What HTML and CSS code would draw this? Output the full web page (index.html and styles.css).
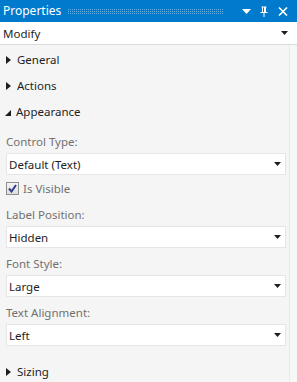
FILE: index.html
```html
<!DOCTYPE html>
<html>
<head>
<meta charset="utf-8">
<link rel="stylesheet" href="styles.css">
</head>
<body>
<div class="panel">
  <div class="titlebar">
    <span class="title">Properties</span>
    <svg class="grip" height="5"><defs><pattern id="dots" width="2" height="2" patternUnits="userSpaceOnUse"><rect width="1" height="1" fill="#63ade3"/></pattern></defs><rect width="100%" height="100%" fill="url(#dots)"/></svg>
    <svg class="tb-icon" width="9" height="5" viewBox="0 0 9 5"><path d="M0 0H9L4.5 5Z" fill="#fff"/></svg>
    <svg class="tb-icon" width="8" height="11" viewBox="0 0 8 11"><path d="M1.5 0.5H6.5V1.5H6V6H7.5V7H4.5V11H3.5V7H0.5V6H2V1.5H1.5Z M3 1.5V6H4V1.5Z" fill="#fff" fill-rule="evenodd"/></svg>
    <svg class="tb-icon x" width="10" height="9" viewBox="0 0 10 9"><path d="M1 0.5L9 8.5M9 0.5L1 8.5" stroke="#fff" stroke-width="1.6"/></svg>
  </div>
  <div class="selector">
    <span>Modify</span>
    <svg class="arrow" width="7" height="4" viewBox="0 0 7 4"><path d="M0 0H7L3.5 4Z" fill="#1e1e1e"/></svg>
  </div>
  <div class="body">
    <div class="content">
      <div class="section"><span class="tri-right"></span>General</div>
      <div class="section"><span class="tri-right"></span>Actions</div>
      <div class="section"><svg class="tri-open" width="6" height="6" viewBox="0 0 6 6"><path d="M6 0V6H0Z" fill="#1e1e1e"/></svg>Appearance</div>
      <div class="fields">
        <div class="field first">
          <div class="label">Control Type:</div>
          <div class="combo"><span>Default (Text)</span><svg width="7" height="4" viewBox="0 0 7 4"><path d="M0 0H7L3.5 4Z" fill="#1e1e1e"/></svg></div>
        </div>
        <div class="check-row">
          <span class="checkbox"><svg width="9" height="9" viewBox="0 0 9 9"><path d="M1 4.5L3.5 7.5L8 1" stroke="#2d3f8f" stroke-width="2" fill="none"/></svg></span>
          <span class="check-label">Is Visible</span>
        </div>
        <div class="field">
          <div class="label">Label Position:</div>
          <div class="combo"><span>Hidden</span><svg width="7" height="4" viewBox="0 0 7 4"><path d="M0 0H7L3.5 4Z" fill="#1e1e1e"/></svg></div>
        </div>
        <div class="field">
          <div class="label">Font Style:</div>
          <div class="combo"><span>Large</span><svg width="7" height="4" viewBox="0 0 7 4"><path d="M0 0H7L3.5 4Z" fill="#1e1e1e"/></svg></div>
        </div>
        <div class="field">
          <div class="label">Text Alignment:</div>
          <div class="combo"><span>Left</span><svg width="7" height="4" viewBox="0 0 7 4"><path d="M0 0H7L3.5 4Z" fill="#1e1e1e"/></svg></div>
        </div>
      </div>
      <div class="section sizing"><span class="tri-right"></span>Sizing</div>
    </div>
    <div class="strip"></div>
  </div>
</div>
</body>
</html>
```
FILE: styles.css
```css
html, body {
  margin: 0;
  padding: 0;
}
body {
  width: 297px;
  height: 382px;
  overflow: hidden;
  background: #f5f5f5;
  font-family: "Noto Sans", "Open Sans", sans-serif;
  font-size: 11.5px;
  color: #1e1e1e;
}
.panel {
  display: flex;
  flex-direction: column;
  height: 382px;
}
.titlebar {
  flex-shrink: 0;
  height: 22px;
  background: #007acc;
  display: flex;
  align-items: center;
  padding: 0 9px 0 3px;
  color: #fff;
  box-sizing: border-box;
}
.title {
  font-size: 12px;
  line-height: 22px;
}
.grip {
  flex: 1;
  display: block;
  margin: 0 9px 0 7px;
}
.tb-icon {
  display: block;
  margin-left: 9px;
}
.tb-icon.x {
  margin-left: 10px;
}
.selector {
  flex-shrink: 0;
  height: 22px;
  background: #fff;
  border-bottom: 1px solid #dcdcdc;
  display: flex;
  align-items: center;
  justify-content: space-between;
  padding: 0 9px 0 3px;
}
.selector .arrow {
  display: block;
}
.body {
  flex: 1;
  min-height: 0;
  display: flex;
}
.content {
  flex: 1;
  padding: 2px 0 0 6px;
}
.strip {
  width: 7px;
  border-left: 1px solid #ececec;
  background: #f7f7f7;
}
.section {
  height: 26px;
  display: flex;
  align-items: center;
  line-height: 26px;
}
.tri-right {
  width: 0;
  height: 0;
  border-top: 4px solid transparent;
  border-bottom: 4px solid transparent;
  border-left: 5px solid #1e1e1e;
  margin: 0 6px 0 0;
}
.tri-open {
  display: block;
  margin: 2px 5px 0 -1px;
}
.fields {
  display: flex;
  flex-direction: column;
  padding-right: 3px;
}
.field {
  margin-top: 7px;
}
.field.first {
  margin-top: 8px;
}
.label {
  color: #717171;
  line-height: 17px;
  margin-bottom: 3px;
}
.combo {
  height: 20px;
  background: #fff;
  border: 1px solid #e6e6e6;
  display: flex;
  align-items: center;
  justify-content: space-between;
  padding: 0 4px 0 2px;
}
.combo svg {
  display: block;
}
.check-row {
  display: flex;
  align-items: center;
  height: 16px;
  margin: 5px 0 3px;
}
.checkbox {
  width: 11px;
  height: 11px;
  border: 1px solid #8e8f8f;
  background: linear-gradient(#f4f4f4, #dedede);
  display: flex;
  align-items: center;
  justify-content: center;
  margin-right: 4px;
}
.checkbox svg {
  display: block;
}
.check-label {
  color: #717171;
}
.sizing {
  margin-top: 13px;
}
```
